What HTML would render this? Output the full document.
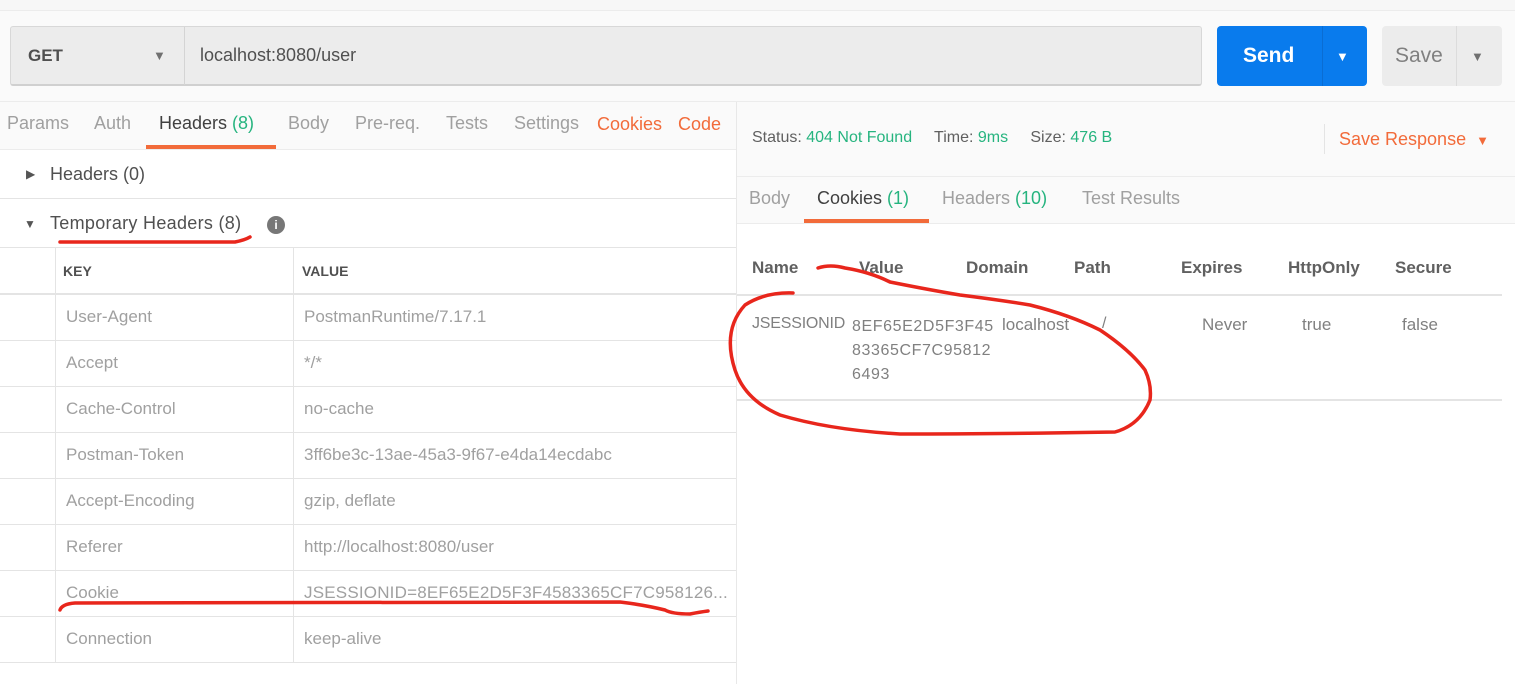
<!DOCTYPE html>
<html><head><meta charset="utf-8"><style>
*{margin:0;padding:0;box-sizing:border-box}
body{width:1515px;height:684px;overflow:hidden;background:#fff;font-family:"Liberation Sans",sans-serif;position:relative;color:#505050}
.a{position:absolute;white-space:nowrap}
.g{color:#26b47f}
.o{color:#f26b3a}
.l{color:#a0a0a0}
.hl{position:absolute;height:1px;background:#e4e4e4}
.vl{position:absolute;width:1px;background:#e4e4e4}
</style></head><body>
<div class="a" style="left:0;top:0;width:1515px;height:102px;background:#fafafa;border-top:10px solid #f7f7f7"></div>
<div class="hl" style="left:0;top:10px;width:1515px;background:#ececec"></div>
<div class="a" style="left:10px;top:26px;width:1192px;height:60px;background:#ececec;border:1px solid #d8d8d8;border-bottom:2px solid #d0d0d0;border-radius:3px"></div>
<div class="vl" style="left:184px;top:27px;height:58px;background:#d4d4d4"></div>
<div class="a" style="left:28px;top:46px;font-size:17px;font-weight:bold;color:#505050">GET</div>
<div class="a" style="left:153px;top:48px;font-size:13px;color:#707070">▼</div>
<div class="a" style="left:200px;top:45px;font-size:18px;color:#505050">localhost:8080/user</div>
<div class="a" style="left:1217px;top:26px;width:150px;height:60px;background:#097bed;border-radius:4px"></div>
<div class="vl" style="left:1322px;top:26px;height:60px;background:#0a6dd3"></div>
<div class="a" style="left:1243px;top:44px;font-size:21px;color:#fff;font-weight:bold">Send</div>
<div class="a" style="left:1336px;top:49px;font-size:13px;color:#fff">▼</div>
<div class="a" style="left:1382px;top:26px;width:120px;height:60px;background:#ececec;border-radius:4px"></div>
<div class="vl" style="left:1456px;top:26px;height:60px;background:#dcdcdc"></div>
<div class="a" style="left:1395px;top:44px;font-size:21px;color:#808080">Save</div>
<div class="a" style="left:1471px;top:49px;font-size:13px;color:#707070">▼</div>
<div class="hl" style="left:0;top:101px;width:1515px;background:#ececec"></div>
<div class="a" style="left:0;top:102px;width:736px;height:47px;background:#fafafa"></div>
<div class="a" style="top:113px;left:7px;font-size:18px;color:#a0a0a0">Params</div>
<div class="a" style="top:113px;left:94px;font-size:18px;color:#a0a0a0">Auth</div>
<div class="a" style="top:113px;left:159px;font-size:18px;color:#404040">Headers <span class="g">(8)</span></div>
<div class="a" style="top:113px;left:288px;font-size:18px;color:#a0a0a0">Body</div>
<div class="a" style="top:113px;left:355px;font-size:18px;color:#a0a0a0">Pre-req.</div>
<div class="a" style="top:113px;left:446px;font-size:18px;color:#a0a0a0">Tests</div>
<div class="a" style="top:113px;left:514px;font-size:18px;color:#a0a0a0">Settings</div>
<div class="a o" style="top:114px;left:597px;font-size:18px">Cookies</div>
<div class="a o" style="top:114px;left:678px;font-size:18px">Code</div>
<div class="a" style="left:146px;top:145px;width:130px;height:4px;background:#f26b3a"></div>
<div class="hl" style="left:0;top:149px;width:736px;background:#ececec"></div>
<div class="vl" style="left:736px;top:102px;height:582px;background:#e8e8e8"></div>
<div class="a" style="left:26px;top:167px;font-size:12px;color:#555">▶</div>
<div class="a" style="left:50px;top:164px;font-size:18px;color:#505050">Headers (0)</div>
<div class="hl" style="left:0;top:198px;width:736px"></div>
<div class="a" style="left:24px;top:217px;font-size:12px;color:#555">▼</div>
<div class="a" style="left:50px;top:213px;font-size:18px;color:#505050;letter-spacing:0.3px">Temporary Headers (8)</div>
<div class="a" style="left:267px;top:216px;width:18px;height:18px;border-radius:50%;background:#777;color:#fff;font-size:12px;font-weight:bold;text-align:center;line-height:18px">i</div>
<div class="hl" style="left:0;top:247px;width:736px"></div>
<div class="a" style="left:63px;top:263px;font-size:14px;font-weight:bold;color:#505050">KEY</div>
<div class="a" style="left:302px;top:263px;font-size:14px;font-weight:bold;color:#505050">VALUE</div>
<div class="hl" style="left:0;top:293px;width:736px;height:2px"></div>
<div class="vl" style="left:55px;top:247px;height:415px"></div>
<div class="vl" style="left:293px;top:247px;height:415px"></div>
<div class="hl" style="left:0;top:340px;width:736px"></div>
<div class="hl" style="left:0;top:386px;width:736px"></div>
<div class="hl" style="left:0;top:432px;width:736px"></div>
<div class="hl" style="left:0;top:478px;width:736px"></div>
<div class="hl" style="left:0;top:524px;width:736px"></div>
<div class="hl" style="left:0;top:570px;width:736px"></div>
<div class="hl" style="left:0;top:616px;width:736px"></div>
<div class="hl" style="left:0;top:662px;width:736px"></div>
<div class="a l" style="left:66px;top:307px;font-size:17px">User-Agent</div><div class="a l" style="left:304px;top:307px;font-size:17px">PostmanRuntime/7.17.1</div>
<div class="a l" style="left:66px;top:353px;font-size:17px">Accept</div><div class="a l" style="left:304px;top:353px;font-size:17px">*/*</div>
<div class="a l" style="left:66px;top:399px;font-size:17px">Cache-Control</div><div class="a l" style="left:304px;top:399px;font-size:17px">no-cache</div>
<div class="a l" style="left:66px;top:445px;font-size:17px">Postman-Token</div><div class="a l" style="left:304px;top:445px;font-size:17px">3ff6be3c-13ae-45a3-9f67-e4da14ecdabc</div>
<div class="a l" style="left:66px;top:491px;font-size:17px">Accept-Encoding</div><div class="a l" style="left:304px;top:491px;font-size:17px">gzip, deflate</div>
<div class="a l" style="left:66px;top:537px;font-size:17px">Referer</div><div class="a l" style="left:304px;top:537px;font-size:17px">http://localhost:8080/user</div>
<div class="a l" style="left:66px;top:583px;font-size:17px">Cookie</div><div class="a l" style="left:304px;top:583px;font-size:17px;letter-spacing:0.2px">JSESSIONID=8EF65E2D5F3F4583365CF7C958126...</div>
<div class="a l" style="left:66px;top:629px;font-size:17px">Connection</div><div class="a l" style="left:304px;top:629px;font-size:17px">keep-alive</div>
<div class="a" style="left:737px;top:102px;width:778px;height:121px;background:#fafafa"></div>
<div class="a" style="left:752px;top:129px;font-size:16px;color:#606060">Status: <span class="g">404 Not Found</span>&nbsp;&nbsp;&nbsp;&nbsp; Time: <span class="g">9ms</span>&nbsp;&nbsp;&nbsp;&nbsp; Size: <span class="g">476 B</span></div>
<div class="vl" style="left:1324px;top:124px;height:30px"></div>
<div class="a o" style="left:1339px;top:129px;font-size:18px">Save Response &nbsp;<span style="font-size:13px">▼</span></div>
<div class="hl" style="left:737px;top:176px;width:778px;background:#ececec"></div>
<div class="a l" style="left:749px;top:188px;font-size:18px">Body</div>
<div class="a" style="left:817px;top:188px;font-size:18px;color:#404040">Cookies <span class="g">(1)</span></div>
<div class="a l" style="left:942px;top:188px;font-size:18px">Headers <span class="g">(10)</span></div>
<div class="a l" style="left:1082px;top:188px;font-size:18px">Test Results</div>
<div class="a" style="left:804px;top:219px;width:125px;height:4px;background:#f26b3a"></div>
<div class="hl" style="left:737px;top:223px;width:778px;background:#ececec"></div>
<div class="a" style="top:258px;left:752px;font-size:17px;font-weight:bold;color:#606060">Name</div>
<div class="a" style="top:258px;left:859px;font-size:17px;font-weight:bold;color:#606060">Value</div>
<div class="a" style="top:258px;left:966px;font-size:17px;font-weight:bold;color:#606060">Domain</div>
<div class="a" style="top:258px;left:1074px;font-size:17px;font-weight:bold;color:#606060">Path</div>
<div class="a" style="top:258px;left:1181px;font-size:17px;font-weight:bold;color:#606060">Expires</div>
<div class="a" style="top:258px;left:1288px;font-size:17px;font-weight:bold;color:#606060">HttpOnly</div>
<div class="a" style="top:258px;left:1395px;font-size:17px;font-weight:bold;color:#606060">Secure</div>
<div class="hl" style="left:737px;top:294px;width:765px;height:2px"></div>
<div class="a" style="top:315px;left:752px;font-size:16px;color:#808080;letter-spacing:-0.2px">JSESSIONID</div>
<div class="a" style="top:315px;left:852px;font-size:16px;color:#808080;line-height:24px;letter-spacing:0.6px">8EF65E2D5F3F45<br>83365CF7C95812<br>6493</div>
<div class="a" style="top:315px;left:1002px;font-size:17px;color:#808080">localhost</div>
<div class="a" style="top:315px;left:1102px;font-size:16px;color:#808080">/</div>
<div class="a" style="top:315px;left:1202px;font-size:17px;color:#808080">Never</div>
<div class="a" style="top:315px;left:1302px;font-size:17px;color:#808080">true</div>
<div class="a" style="top:315px;left:1402px;font-size:17px;color:#808080">false</div>
<div class="hl" style="left:737px;top:399px;width:765px;height:2px"></div>
<svg class="a" style="left:0;top:0" width="1515" height="684" viewBox="0 0 1515 684">
<g fill="none" stroke="#e8261c" stroke-width="3.5" stroke-linecap="round" stroke-linejoin="round">
<path d="M60 242 L235 242 Q245 240 250 237"/>
<path d="M60 610 Q62 604 75 603 L620 602 Q645 605 665 610 Q672 614 690 614 Q700 612 708 611"/>
<path d="M818 268 Q830 264 845 268 Q870 272 890 282 Q930 290 960 295 Q1000 300 1030 305 Q1070 315 1100 330 Q1130 350 1145 370 Q1152 385 1150 400 Q1140 425 1115 432 Q1000 434 900 434 Q830 430 780 415 Q745 400 735 370 Q722 330 745 305 Q765 292 793 293"/>
</g></svg>
</body></html>
